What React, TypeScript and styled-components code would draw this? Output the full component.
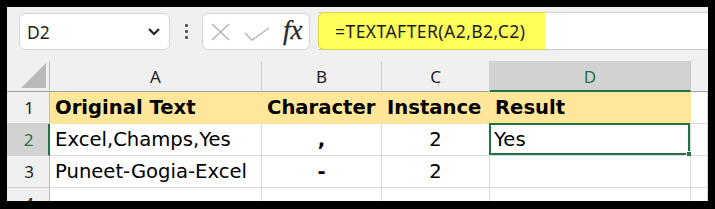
import React from "react";
import styled, { createGlobalStyle } from "styled-components";

const GlobalStyle = createGlobalStyle`
  html, body {
    margin: 0;
    padding: 0;
    background: #000;
  }
`;

const uiFont = `"Noto Sans", "Open Sans", sans-serif`;
const cellFont = `"DejaVu Sans", Verdana, sans-serif`;
const green = "#217346";

type Align = "left" | "center" | "right";

interface CellData {
  text: string;
  align: Align;
  bold?: boolean;
}

const rows: CellData[][] = [
  [
    { text: "Original Text", align: "left", bold: true },
    { text: "Character", align: "left", bold: true },
    { text: "Instance", align: "left", bold: true },
    { text: "Result", align: "left", bold: true },
  ],
  [
    { text: "Excel,Champs,Yes", align: "left" },
    { text: ",", align: "center", bold: true },
    { text: "2", align: "center" },
    { text: "Yes", align: "left" },
  ],
  [
    { text: "Puneet-Gogia-Excel", align: "left" },
    { text: "-", align: "center", bold: true },
    { text: "2", align: "center" },
    { text: "", align: "left" },
  ],
  [
    { text: "", align: "left" },
    { text: "", align: "left" },
    { text: "", align: "left" },
    { text: "", align: "left" },
  ],
];

const columns = ["A", "B", "C", "D"];

const App = function () {
  return (
    <Frame>
      <GlobalStyle />
      <Window>
        <Toolbar>
          <NameBox>
            <NameText>D2</NameText>
            <svg width="14" height="9" viewBox="0 0 14 9">
              <path d="M2 2 L7 7 L12 2" fill="none" stroke="#222" strokeWidth="2.2" />
            </svg>
          </NameBox>
          <Dots>
            <Dot />
            <Dot />
            <Dot />
          </Dots>
          <FxBox>
            <svg width="19" height="18" viewBox="0 0 19 18">
              <path d="M1 1 L18 17 M18 1 L1 17" stroke="#b3b3b3" strokeWidth="1.4" fill="none" />
            </svg>
            <svg width="26" height="14" viewBox="0 0 26 14">
              <path d="M1 6 L8 13 L25 1" stroke="#b3b3b3" strokeWidth="1.4" fill="none" />
            </svg>
            <FxLabel>fx</FxLabel>
          </FxBox>
          <FormulaInput>
            <FormulaHighlight>=TEXTAFTER(A2,B2,C2)</FormulaHighlight>
          </FormulaInput>
        </Toolbar>
        <Sheet>
          <Corner>
            <svg width="25" height="25" viewBox="0 0 25 25">
              <path d="M25 0 L25 25 L0 25 Z" fill="#b9b9b9" />
            </svg>
          </Corner>
          {columns.map((c) => (
            <ColHeader key={c} $active={c === "D"}>
              {c}
            </ColHeader>
          ))}
          <ColHeader $active={false} $last />
          {rows.map((row, r) => (
            <React.Fragment key={r}>
              <RowHeader $active={r === 1}>{r + 1}</RowHeader>
              {row.map((cell, c) => (
                <Cell
                  key={c}
                  $align={cell.align}
                  $bold={!!cell.bold}
                  $header={r === 0}
                  $selected={r === 1 && c === 3}
                >
                  {cell.text}
                </Cell>
              ))}
              <Cell $align="left" $bold={false} $header={false} $selected={false} />
            </React.Fragment>
          ))}
        </Sheet>
      </Window>
    </Frame>
  );
};

export default App;

const Frame = styled.div`
  width: 715px;
  height: 209px;
  box-sizing: border-box;
  padding: 7px 7px 8px 7px;
  background: #000;
`;

const Window = styled.div`
  width: 701px;
  height: 194px;
  overflow: hidden;
  background: #f0f0f0;
  display: flex;
  flex-direction: column;
`;

const Toolbar = styled.div`
  height: 54px;
  flex: none;
  box-sizing: border-box;
  padding: 6px 0 0 12px;
  display: flex;
  align-items: flex-start;
`;

const NameBox = styled.div`
  width: 151px;
  height: 37px;
  box-sizing: border-box;
  background: #fff;
  border: 1px solid #d6d6d6;
  border-radius: 6px;
  display: flex;
  align-items: center;
  justify-content: space-between;
  padding: 0 8px 0 7px;
`;

const NameText = styled.span`
  font: 17.5px ${uiFont};
  color: #1f1f1f;
`;

const Dots = styled.div`
  width: 32px;
  height: 37px;
  display: flex;
  flex-direction: column;
  align-items: center;
  justify-content: center;
  gap: 3px;
`;

const Dot = styled.div`
  width: 3px;
  height: 3px;
  background: #555;
  border-radius: 1px;
`;

const FxBox = styled.div`
  width: 108px;
  height: 37px;
  box-sizing: border-box;
  background: #fff;
  border: 1px solid #d6d6d6;
  border-radius: 6px;
  display: flex;
  align-items: center;
  padding: 0 6px 0 8px;
  gap: 13px;
  & > svg:nth-child(2) {
    margin-top: 4px;
    margin-left: 1px;
  }
`;

const FxLabel = styled.span`
  font: italic 27px "Liberation Serif", "DejaVu Serif", serif;
  color: #2b2b2b;
  line-height: 1;
  margin-top: -2px;
  -webkit-text-stroke: 0.3px #2b2b2b;
`;

const FormulaInput = styled.div`
  margin-left: 8px;
  flex: 1;
  height: 38px;
  margin-top: -1px;
  box-sizing: border-box;
  background: #fff;
  border-top: 1px solid #d4d4d4;
  border-bottom: 1px solid #c8c8c8;
  display: flex;
`;

const FormulaHighlight = styled.div`
  width: 227px;
  box-sizing: border-box;
  margin: -1px 0;
  background: #ffff5a;
  border: 1px solid #d8d84a;
  border-right: none;
  border-radius: 6px 0 0 6px;
  display: flex;
  align-items: center;
  padding-left: 16px;
  font: 17.5px ${uiFont};
  letter-spacing: 0.45px;
  color: #1b1b1b;
  white-space: nowrap;
`;

const Sheet = styled.div`
  display: grid;
  grid-template-columns: 43px 212px 120px 108px 201px 1fr;
  grid-template-rows: 31px 32px 32px 32px 32px;
  background: #fff;
`;

const Corner = styled.div`
  background: #f0f0f0;
  border-right: 1px solid #bdbdbd;
  border-bottom: 1px solid #9e9e9e;
  box-sizing: border-box;
  display: flex;
  align-items: flex-end;
  justify-content: flex-end;
  padding: 0 3px 3px 0;
`;

const ColHeader = styled.div<{ $active: boolean; $last?: boolean }>`
  box-sizing: border-box;
  background: ${(p) => (p.$active ? "#d2d2d2" : "#f0f0f0")};
  color: ${(p) => (p.$active ? green : "#222")};
  border-right: ${(p) => (p.$last ? "none" : p.$active ? "1px solid #c6c6c6" : "1px solid #d0d0d0")};
  border-bottom: ${(p) => (p.$active ? `2px solid ${green}` : "1px solid #9e9e9e")};
  font: 17px ${uiFont};
  display: flex;
  align-items: center;
  justify-content: center;
  padding-top: ${(p) => (p.$active ? "1px" : "0")};
`;

const RowHeader = styled.div<{ $active: boolean }>`
  box-sizing: border-box;
  background: ${(p) => (p.$active ? "#d2d2d2" : "#f0f0f0")};
  color: ${(p) => (p.$active ? green : "#222")};
  border-right: ${(p) => (p.$active ? `2px solid ${green}` : "1px solid #bdbdbd")};
  border-bottom: 1px solid #d0d0d0;
  font: 17px ${uiFont};
  display: flex;
  align-items: center;
  justify-content: center;
  padding-left: 2px;
`;

const Cell = styled.div<{ $align: Align; $bold: boolean; $header: boolean; $selected: boolean }>`
  position: relative;
  box-sizing: border-box;
  background: ${(p) => (p.$header ? "#ffe699" : "#fff")};
  border-right: 1px solid ${(p) => (p.$header ? "#ffe699" : "#d9d9d9")};
  border-bottom: 1px solid ${(p) => (p.$header ? "#ffe699" : "#d9d9d9")};
  font: ${(p) => (p.$bold ? "bold" : "normal")} 19.6px ${cellFont};
  color: #000;
  display: flex;
  align-items: center;
  justify-content: ${(p) => (p.$align === "center" ? "center" : p.$align === "right" ? "flex-end" : "flex-start")};
  padding: 0 5px;
  white-space: nowrap;
  overflow: visible;
  box-shadow: ${(p) => (p.$selected ? `inset 0 0 0 2px ${green}` : "none")};
  margin: ${(p) => (p.$selected ? "-1px 0 0 -1px" : "0")};
  ${(p) =>
    p.$selected &&
    `
    &::after {
      content: "";
      position: absolute;
      right: -4px;
      bottom: -4px;
      width: 6px;
      height: 6px;
      background: ${green};
      border: 1px solid #fff;
    }
  `}
`;
